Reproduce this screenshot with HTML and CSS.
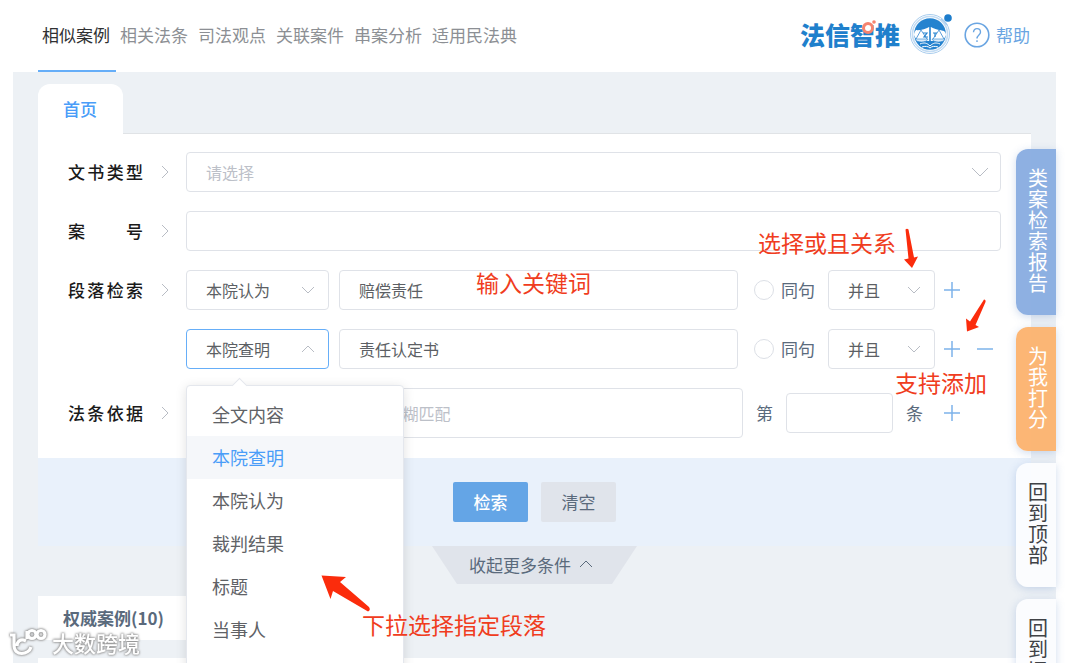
FILE: index.html
```html
<!DOCTYPE html>
<html lang="zh-CN">
<head>
  <meta charset="UTF-8">
  <meta name="viewport" content="width=device-width, initial-scale=1.0">
  <title>法信智推</title>
  <link rel="stylesheet" href="styles.css">
</head>
<body>
<header class="header">
  <nav class="nav">
    <a href="#" class="active">相似案例</a>
    <a href="#">相关法条</a>
    <a href="#">司法观点</a>
    <a href="#">关联案件</a>
    <a href="#">串案分析</a>
    <a href="#">适用民法典</a>
  </nav>
  <div class="brand">
    <span class="brand-name">法信智推
      <svg class="brand-ring" viewBox="0 0 16 16" width="16" height="16"><circle cx="7" cy="9" r="4.5" fill="#fff" stroke="#f5836f" stroke-width="3"/><circle cx="13" cy="3" r="1.8" fill="#f5836f"/></svg>
    </span>
    <svg class="emblem" viewBox="0 0 44 44" width="44" height="44">
      <circle cx="20" cy="23" r="19.5" fill="#fff" stroke="#a9cdee" stroke-width="1"/>
      <circle cx="20" cy="23" r="17.5" fill="none" stroke="#c3dcf3" stroke-width="1.6"/>
      <circle cx="20" cy="23" r="15.8" fill="#2583cf"/>
      <path d="M4 24c0-2 1-4 2-5 5 0 9-2 14-4 5 2 9 4 14 5 1 1 2 2 2 4l-3 6H7z" fill="#fff"/>
      <path d="M7 18.500c5 0 9-1.500 13-4 4 2.500 8 4 13 4M20 12v25M9 34c4-2 7-2 11 1 4-3 7-3 11-1" fill="none" stroke="#2583cf" stroke-width="1.6"/>
      <path d="M10 33c4-2 7-1 10 2 3-3 6-4 10-2M12 36c3-1 6-1 8 1 2-2 5-2 8-1" fill="none" stroke="#fff" stroke-width="1"/>
      <path d="M11 19l-5 9M11 19l6 9M29 19l-6 9M29 19l5 9" fill="none" stroke="#5c9fdb" stroke-width="1"/>
      <path d="M5 28h13c-1 4-12 4-13 0zM22 28h13c-1 4-12 4-13 0z" fill="#dcebf9" stroke="#2583cf" stroke-width="0.6"/>
      <path d="M13 22h4l-3 4h4M23 22h4M25 22v4" fill="none" stroke="#2583cf" stroke-width="1.2"/>
      <circle cx="38" cy="7" r="3.8" fill="#1d7dcc"/>
      <path d="M31 8c3 2 4 3 6 6" fill="none" stroke="#a9cdee" stroke-width="1.5"/>
    </svg>
    <a href="#" class="help">
      <svg viewBox="0 0 26 26" width="26" height="26" fill="none" stroke="#6aa5e2" stroke-width="1.6"><circle cx="13" cy="13" r="11.8"/><path d="M9.5 10.2c0-4.8 7-4.6 7 0 0 2.7-3.5 2.8-3.5 6.3M13 18.2v1.8" stroke-width="1.4"/></svg>
      <span>帮助</span>
    </a>
  </div>
</header>

<main class="page">
  <div class="tabs"><a href="#" class="tab">首页</a></div>

  <form class="search" onsubmit="return false">
    <div class="fields">
      <div class="row">
        <label class="name" for="docType">文书类型</label>
        <svg class="arrow" viewBox="0 0 8 14"><path d="M1 1l6 6-6 6"/></svg>
        <div class="select grow light wide">
          <select id="docType"><option>请选择</option></select>
          <svg viewBox="0 0 18 10" width="18" height="10"><path d="M1 1l8 8 8-8"/></svg>
        </div>
      </div>

      <div class="row">
        <label class="name" for="caseNo">案 号</label>
        <svg class="arrow" viewBox="0 0 8 14"><path d="M1 1l6 6-6 6"/></svg>
        <input type="text" id="caseNo" class="box grow">
      </div>

      <div class="row">
        <label class="name" for="part1">段落检索</label>
        <svg class="arrow" viewBox="0 0 8 14"><path d="M1 1l6 6-6 6"/></svg>
        <div class="select part">
          <select id="part1"><option>本院认为</option></select>
          <svg viewBox="0 0 14 8" width="14" height="8"><path d="M1 1l6 6 6-6"/></svg>
        </div>
        <input type="text" class="box grow" value="赔偿责任" aria-label="关键词">
        <div class="after">
          <label class="same"><input type="radio" name="same1"><span>同句</span></label>
          <div class="select logic">
            <select aria-label="关系"><option>并且</option><option>或者</option></select>
            <svg viewBox="0 0 14 8" width="14" height="8"><path d="M1 1l6 6 6-6"/></svg>
          </div>
          <button type="button" class="icon" aria-label="添加"><svg viewBox="0 0 16 16"><path d="M0 8h16M8 0v16"/></svg></button>
        </div>
      </div>

      <div class="row">
        <span class="name"></span>
        <span class="arrow"></span>
        <div class="select part open">
          <select id="part2" aria-label="段落"><option>本院查明</option></select>
          <svg viewBox="0 0 14 8" width="14" height="8"><path d="M1 7l6-6 6 6"/></svg>
          <ul class="menu">
            <li>全文内容</li>
            <li class="selected">本院查明</li>
            <li>本院认为</li>
            <li>裁判结果</li>
            <li>标题</li>
            <li>当事人</li>
          </ul>
        </div>
        <input type="text" class="box grow" value="责任认定书" aria-label="关键词">
        <div class="after">
          <label class="same"><input type="radio" name="same2"><span>同句</span></label>
          <div class="select logic">
            <select aria-label="关系"><option>并且</option><option>或者</option></select>
            <svg viewBox="0 0 14 8" width="14" height="8"><path d="M1 1l6 6 6-6"/></svg>
          </div>
          <button type="button" class="icon" aria-label="添加"><svg viewBox="0 0 16 16"><path d="M0 8h16M8 0v16"/></svg></button>
          <button type="button" class="icon" aria-label="删除"><svg viewBox="0 0 16 16"><path d="M0 8h16"/></svg></button>
        </div>
      </div>

      <div class="row">
        <label class="name" for="law">法条依据</label>
        <svg class="arrow" viewBox="0 0 8 14"><path d="M1 1l6 6-6 6"/></svg>
        <input type="text" id="law" class="box grow tall" placeholder="请输入法规名称,支持标题模糊匹配">
        <div class="article">
          <label for="article">第</label>
          <input type="text" id="article" class="box">
          <span>条</span>
          <button type="button" class="icon" aria-label="添加"><svg viewBox="0 0 16 16"><path d="M0 8h16M8 0v16"/></svg></button>
        </div>
      </div>
    </div>

    <div class="actions">
      <button type="submit" class="btn primary">检索</button>
      <button type="reset" class="btn">清空</button>
    </div>
  </form>

  <button type="button" class="collapse">收起更多条件
    <svg viewBox="0 0 14 8" width="14" height="8"><path d="M1 7l6-6 6 6"/></svg>
  </button>

  <h2 class="result-tab">权威案例(10)</h2>
  <div class="results"></div>

  <aside class="side">
    <button type="button" class="blue">类案检索报告</button>
    <button type="button" class="orange">为我打分</button>
    <button type="button">回到顶部</button>
    <button type="button">回到旧版</button>
  </aside>
</main>

<!-- notes on top of the form -->
<p class="note note-keyword">输入关键词</p>
<p class="note note-logic">选择或且关系</p>
<p class="note note-add">支持添加</p>
<p class="note note-menu">下拉选择指定段落</p>
<svg class="pointers" viewBox="0 0 1080 663" width="1080" height="663" fill="#fb2c0c">
  <path d="M905.500 229.500Q907 228 908.500 229.500L914 257.500L918 256.500L912 268L904 259.500L908.500 258.500z"/>
  <path d="M984 299.500Q986 299.500 985.500 302L975.500 325L979 327L967 331.500L966 318.500L970 321.500z"/>
  <path d="M321.500 575.500L346 577L340 582L369 607Q371 610 368 611.500L333 591L330.500 599z"/>
</svg>

<div class="watermark">
  <svg viewBox="0 0 40 30" width="40" height="30" fill="none" stroke="#fff" stroke-width="3.2"><path d="M2 8h4v10c0 12 15 10 17 2M18 14c-6-3-9 1-9 5M19 4v8"/><circle cx="24" cy="7.500" r="4"/><circle cx="33" cy="7.500" r="4"/></svg>
  大数跨境
</div>
</body>
</html>
```
FILE: styles.css
```css
* {
  box-sizing: border-box;
}

body {
  margin: 0;
  height: 100vh;
  overflow: hidden;
  position: relative;
  display: flex;
  flex-direction: column;
  background: #fff;
  color: #5a6a7c;
  font-family: "Noto Sans CJK SC", sans-serif;
  font-size: 17px;
}

a {
  text-decoration: none;
}

button, input, select {
  font-family: inherit;
  font-size: inherit;
  margin: 0;
}

/* header */
.header {
  display: flex;
  justify-content: space-between;
  height: 72px;
  padding: 0 50px 0 38px;
}

.nav {
  display: flex;
}

.nav a {
  padding: 0 4px;
  min-width: 78px;
  line-height: 70px;
  white-space: nowrap;
  color: #8c8f94;
  border-bottom: 2px solid transparent;
}

.nav a.active {
  color: #303133;
  border-color: #66aef8;
}

.brand {
  display: flex;
  align-items: center;
  gap: 10px;
  height: 70px;
}

.brand-name {
  position: relative;
  padding-bottom: 2px;
  font-size: 25px;
  font-weight: 900;
  color: #1f80cc;
}

.brand-ring {
  position: absolute;
  left: 61px;
  top: 3px;
}

.emblem {
  margin-bottom: 4px;
}

.help {
  display: flex;
  align-items: center;
  gap: 6px;
  color: #6aa5e2;
}

.help span {
  padding-bottom: 2px;
}

/* page */
.page {
  position: relative;
  flex: 1;
  min-height: 0;
  margin: 0 24px 0 13px;
  padding: 12px 25px 0;
  background: #edf1f5;
}

.tabs {
  display: flex;
  border-bottom: 1px solid #e0e3e6;
}

.tab {
  padding: 0 26px 0 25px;
  line-height: 50px;
  margin-bottom: -1px;
  background: #fff;
  border-radius: 12px 12px 0 0;
  color: #4a9df8;
  font-weight: 500;
}

.fields {
  display: grid;
  gap: 19px;
  padding: 18px 30px 20px;
  background: #fff;
}

.row {
  display: flex;
  align-items: center;
}

.name {
  width: 75px;
  padding-bottom: 2px;
  color: #1a1a1a;
  font-weight: 500;
  text-align-last: justify;
}

.arrow {
  width: 8px;
  height: 14px;
  margin: 0 17px 0 18px;
}

svg.arrow, .select svg {
  fill: none;
  stroke: #b8bcc4;
}

.box, .select select {
  height: 40px;
  padding: 0 19px;
  border: 1px solid #dfe2e8;
  border-radius: 4px;
  background: #fff;
  color: #5c5f64;
  font-size: 16px;
  outline: none;
}

.box {
  min-width: 0;
}

.box.tall {
  height: 50px;
}

.box::placeholder {
  color: #bcc0c8;
}

.grow {
  flex: 1;
}

.select {
  position: relative;
  display: grid;
  align-items: center;
}

.select select {
  width: 100%;
  grid-area: 1 / 1;
  appearance: none;
}

.select > svg {
  grid-area: 1 / 1;
  justify-self: end;
  margin-right: 14px;
  z-index: 1;
  pointer-events: none;
}

.select.light select {
  color: #bcc0c8;
}

.select.wide > svg {
  margin-right: 12px;
}

.part {
  width: 143px;
  margin-right: 10px;
}

.open select {
  border-color: #66aef8;
}

.after {
  display: flex;
  align-items: center;
  width: 263px;
  padding-left: 16px;
}

.same {
  display: flex;
  align-items: center;
  gap: 7px;
}

.same span {
  padding-bottom: 2px;
}

.same input {
  appearance: none;
  width: 20px;
  height: 20px;
  border: 1px solid #dcdfe6;
  border-radius: 50%;
  background: #fff;
}

.logic {
  width: 107px;
  margin-left: 13px;
}

.icon {
  width: 16px;
  height: 16px;
  padding: 0;
  margin-left: 9px;
  border: 0;
  background: none;
}

.icon + .icon {
  margin-left: 17px;
}

.icon svg {
  display: block;
  stroke: #7db3ea;
  stroke-width: 1.5;
}

.article {
  display: flex;
  align-items: center;
  gap: 13px;
  width: 258px;
  padding-left: 13px;
}

.article .box {
  width: 107px;
}

.article label, .article span {
  padding-bottom: 2px;
}

.article .icon {
  margin-left: 8px;
}

/* open drop-down list */
.menu {
  position: absolute;
  top: 56px;
  left: 0;
  z-index: 5;
  width: 218px;
  height: 320px;
  margin: 0;
  padding: 7px 0;
  list-style: none;
  background: #fff;
  border: 1px solid #e4e7ed;
  border-radius: 4px;
  box-shadow: 0 2px 12px rgba(0, 0, 0, 0.12);
  font-size: 18px;
}

.menu::before {
  content: "";
  position: absolute;
  top: -6px;
  left: 47px;
  width: 10px;
  height: 10px;
  background: #fff;
  border: 1px solid #e4e7ed;
  border-width: 1px 0 0 1px;
  transform: rotate(45deg);
}

.menu li {
  padding: 0 25px;
  line-height: 43px;
  color: #606266;
}

.menu li.selected {
  background: #f5f7fa;
  color: #4a9df8;
}

.actions {
  display: flex;
  justify-content: center;
  gap: 13px;
  padding: 24px;
  background: #e9f1fb;
}

.btn {
  width: 75px;
  height: 40px;
  padding: 0 0 2px;
  border: 0;
  border-radius: 2px;
  background: #e0e4eb;
  color: #5a6a7c;
}

.btn.primary {
  background: #64a5e6;
  color: #fff;
  font-weight: 500;
}

.collapse {
  display: flex;
  align-items: center;
  gap: 8px;
  margin: 0 auto;
  height: 38px;
  padding: 0 44px 2px 37px;
  border: 0;
  background: #e0e4eb;
  clip-path: polygon(0 0, 100% 0, calc(100% - 25px) 100%, 25px 100%);
  color: #5a6a7c;
}

.collapse svg {
  fill: none;
  stroke: #5a6a7c;
}

.result-tab {
  width: 180px;
  margin: 12px 0 18px;
  padding-left: 25px;
  background: #fff;
  font-size: 17px;
  font-weight: 700;
  line-height: 44px;
}

.results {
  height: 40px;
  background: #fff;
}

/* buttons on the right edge */
.side {
  position: absolute;
  right: 0;
  top: 77px;
  z-index: 3;
  display: grid;
  gap: 12px;
}

.side button {
  width: 40px;
  padding: 18px 8px 22px 12px;
  border: 0;
  border-radius: 12px 0 0 12px;
  background: rgba(252, 253, 255, 0.9);
  box-shadow: 0 2px 8px rgba(100, 140, 200, 0.3);
  color: #404246;
  font-size: 20px;
  line-height: 21px;
}

.side .blue {
  background: rgba(136, 172, 224, 0.95);
  color: #fff;
}

.side .orange {
  background: rgba(252, 178, 110, 0.95);
  color: #fff;
}

/* red notes */
.note {
  position: absolute;
  z-index: 10;
  margin: 0;
  color: #f03c20;
  font-size: 23px;
  line-height: 30px;
}

.note-keyword {
  left: 476px;
  top: 267px;
}

.note-logic {
  left: 758px;
  top: 227px;
}

.note-add {
  left: 895px;
  top: 367px;
}

.note-menu {
  left: 362px;
  top: 609px;
}

.pointers {
  position: absolute;
  left: 0;
  top: 0;
  z-index: 10;
  pointer-events: none;
}

.watermark {
  position: absolute;
  left: 8px;
  bottom: 4px;
  z-index: 11;
  display: flex;
  align-items: center;
  gap: 4px;
  color: #fff;
  font-size: 22px;
  font-weight: 500;
  line-height: 34px;
  filter: drop-shadow(0 0 1px #888) drop-shadow(0 0 1px #aaa);
}
```
